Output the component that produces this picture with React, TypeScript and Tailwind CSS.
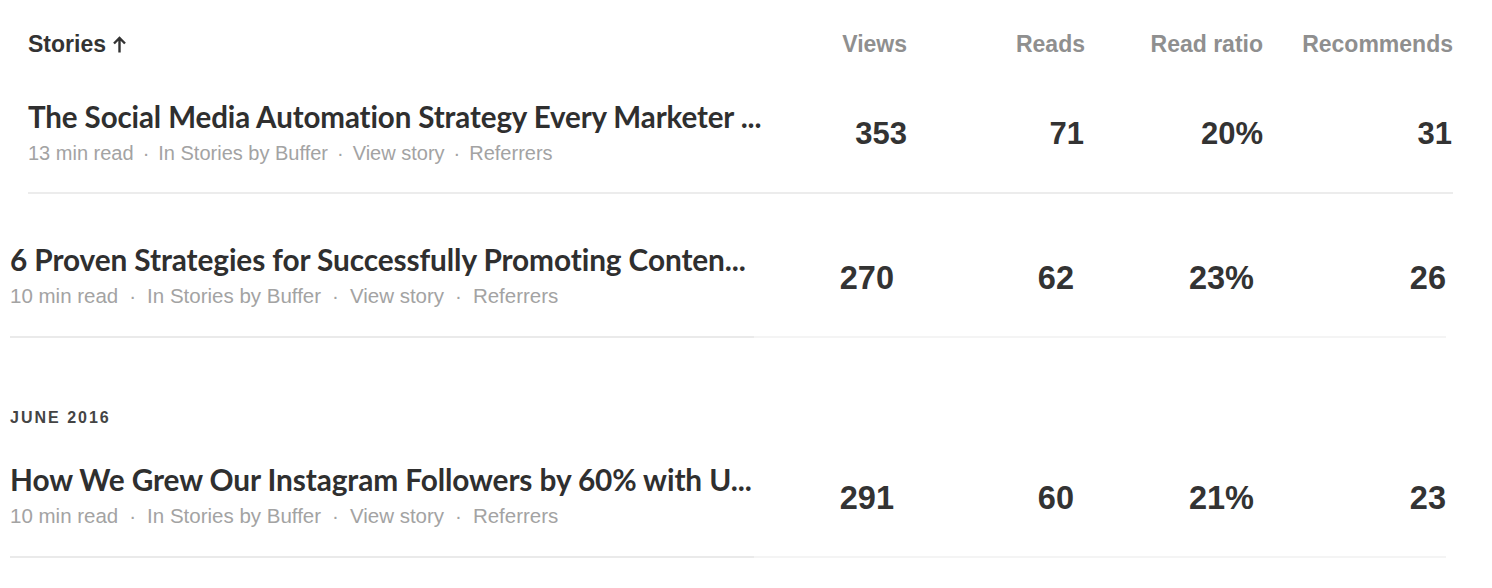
import React from 'react'

type Story = {
  title: string
  readTime: string
  views: number
  reads: number
  ratio: string
  recommends: number
}

const stories: Story[] = [
  {
    title: 'The Social Media Automation Strategy Every Marketer ...',
    readTime: '13 min read',
    views: 353,
    reads: 71,
    ratio: '20%',
    recommends: 31,
  },
  {
    title: '6 Proven Strategies for Successfully Promoting Conten...',
    readTime: '10 min read',
    views: 270,
    reads: 62,
    ratio: '23%',
    recommends: 26,
  },
  {
    title: 'How We Grew Our Instagram Followers by 60% with U...',
    readTime: '10 min read',
    views: 291,
    reads: 60,
    ratio: '21%',
    recommends: 23,
  },
]

const sans = "font-['Liberation_Sans',Arial,sans-serif]"
const titleFont = "font-['Lato','Noto_Sans',sans-serif]"

function Meta({ readTime, wide }: { readTime: string; wide?: boolean }) {
  const parts = [readTime, 'In Stories by Buffer', 'View story', 'Referrers']
  return (
    <p
      className={`${sans} mt-[6px] whitespace-nowrap leading-[24px] text-[#a3a3a3] ${
        wide ? 'text-[20.5px]' : 'text-[20px]'
      }`}
    >
      {parts.map((p, i) => (
        <span key={p}>
          {i > 0 && <span className={wide ? 'mx-[11px]' : 'mx-[9px]'}>·</span>}
          {p}
        </span>
      ))}
    </p>
  )
}

function Title({ children, wide }: { children: React.ReactNode; wide?: boolean }) {
  return (
    <h2
      className={`${titleFont} whitespace-nowrap font-bold leading-[36px] tracking-[-0.1px] text-[#2f2f2f] ${
        wide ? 'text-[29.8px]' : 'text-[29.5px]'
      }`}
    >
      {children}
    </h2>
  )
}

function Stat({ value, className }: { value: React.ReactNode; className: string }) {
  return <div className={`${className} ${sans} text-right font-bold text-[#333]`}>{value}</div>
}

// first row sits a bit further right than the other two, as in the capture
function FirstRow({ story }: { story: Story }) {
  return (
    <div className="pl-[28px] pr-[40px] pt-[40px]">
      <div className="flex items-center text-[31px]">
        <div className="min-w-0 flex-1">
          <Title>{story.title}</Title>
          <Meta readTime={story.readTime} />
        </div>
        <Stat value={story.views} className="w-[139px] pt-[5px]" />
        <Stat value={story.reads} className="w-[177px] pt-[5px]" />
        <Stat value={story.ratio} className="w-[179px] pt-[5px]" />
        <Stat value={story.recommends} className="w-[189px] pt-[5px]" />
      </div>
      <div className="mr-[-1px] mt-[27px] h-[2px] bg-[#ececec]" />
    </div>
  )
}

function Row({ story, top }: { story: Story; top: string }) {
  return (
    <div className={`flex pl-[10px] pr-[46px] ${top}`}>
      <div className="min-w-0 flex-1">
        <Title wide>{story.title}</Title>
        <Meta readTime={story.readTime} wide />
        <div className="mt-[28px] h-[2px] bg-[#eaeaea]" />
      </div>
      <div className="flex w-[692px] flex-col">
        <div className="flex h-[72px] items-center text-[32.5px]">
          <Stat value={story.views} className="w-[140px]" />
          <Stat value={story.reads} className="w-[180px]" />
          <Stat value={story.ratio} className="w-[180px]" />
          <Stat value={story.recommends} className="w-[192px]" />
        </div>
        <div className="mt-[22px] h-[2px] bg-[#f4f4f4]" />
      </div>
    </div>
  )
}

export default function App() {
  return (
    <div className="min-h-screen w-[1492px] bg-white">
      {/* Table header */}
      <div className={`${sans} flex pl-[28px] pr-[39px] pt-[29px] text-[23px] font-bold leading-[30px]`}>
        <div className="flex flex-1 items-center gap-[6px] text-[#333]">
          Stories
          <svg width="15" height="17" viewBox="0 0 15 17" fill="none" stroke="#333" strokeWidth="2.4">
            <path d="M7.5 16.5V2M2 7.5l5.5-5.5 5.5 5.5" />
          </svg>
        </div>
        <div className="w-[140px] text-right text-[#8f8f8f]">Views</div>
        <div className="w-[178px] text-right text-[#8f8f8f]">Reads</div>
        <div className="w-[178px] text-right text-[#8f8f8f]">Read ratio</div>
        <div className="w-[190px] text-right text-[#8f8f8f]">Recommends</div>
      </div>

      <FirstRow story={stories[0]} />
      <Row story={stories[1]} top="pt-[48px]" />

      <div className={`${sans} mt-[70px] pl-[10px] text-[16px] font-bold leading-[20px] tracking-[2px] text-[#444]`}>
        JUNE 2016
      </div>
      <Row story={stories[2]} top="pt-[34px]" />
    </div>
  )
}
